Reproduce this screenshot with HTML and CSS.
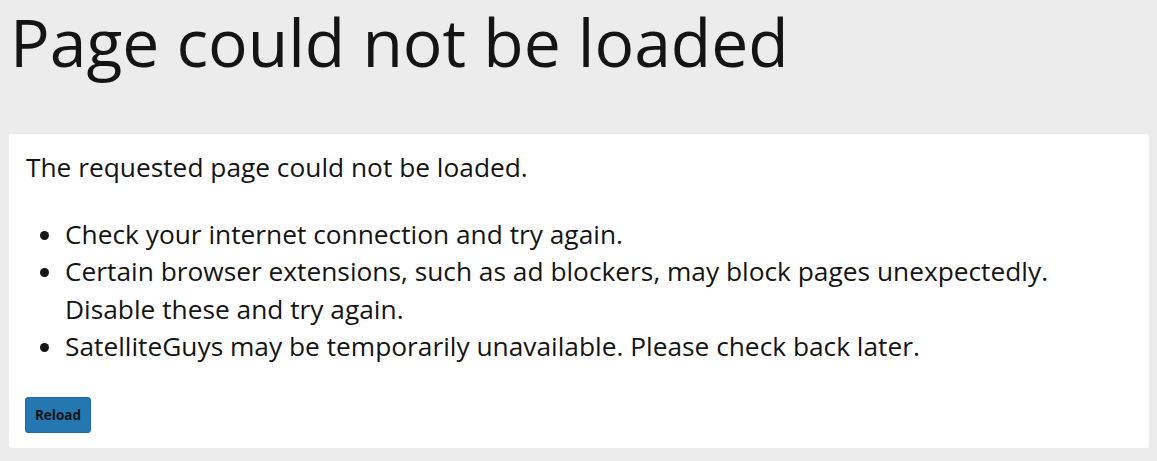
FILE: index.html
```html
<!DOCTYPE html>
<html>
<head>
<meta charset="utf-8">
<link rel="stylesheet" href="styles.css">
<title>Page could not be loaded</title>
</head>
<body>
<h1 class="title">Page could not be loaded</h1>
<div class="card">
  <p class="lead">The requested page could not be loaded.</p>
  <ul class="reasons">
    <li>Check your internet connection and try again.</li>
    <li>Certain browser extensions, such as ad blockers, may block pages unexpectedly. Disable these and try again.</li>
    <li>SatelliteGuys may be temporarily unavailable. Please check back later.</li>
  </ul>
  <button class="reload" type="button">Reload</button>
</div>
</body>
</html>
```
FILE: styles.css
```css
html, body {
  margin: 0;
  padding: 0;
  background: #ececec;
}
body {
  padding: 0 8px 13px 9px;
  font-family: "Open Sans", "Noto Sans", sans-serif;
  color: #141414;
}
.title {
  margin: 0;
  padding: 1px 0 0 1px;
  height: 134px;
  box-sizing: border-box;
  font-weight: 400;
  font-size: 66px;
  line-height: 80px;
}
.card {
  background: #fff;
  border-radius: 3px;
  padding: 15px 16px 15px 17px;
}
.lead {
  margin: 0 0 29.6px;
  font-size: 26.3px;
  line-height: 37.4px;
}
.reasons {
  margin: 0 0 31px;
  padding-left: 39px;
  font-size: 26.3px;
  line-height: 37.4px;
}
.reload {
  display: block;
  margin-left: -1px;
  background: #2577b1;
  border: 1px solid #1f6aa0;
  border-radius: 3px;
  color: #141414;
  font-family: "Open Sans", "Noto Sans", sans-serif;
  font-weight: 700;
  font-size: 13.5px;
  height: 36px;
  width: 66px;
  padding: 0;
}
```
